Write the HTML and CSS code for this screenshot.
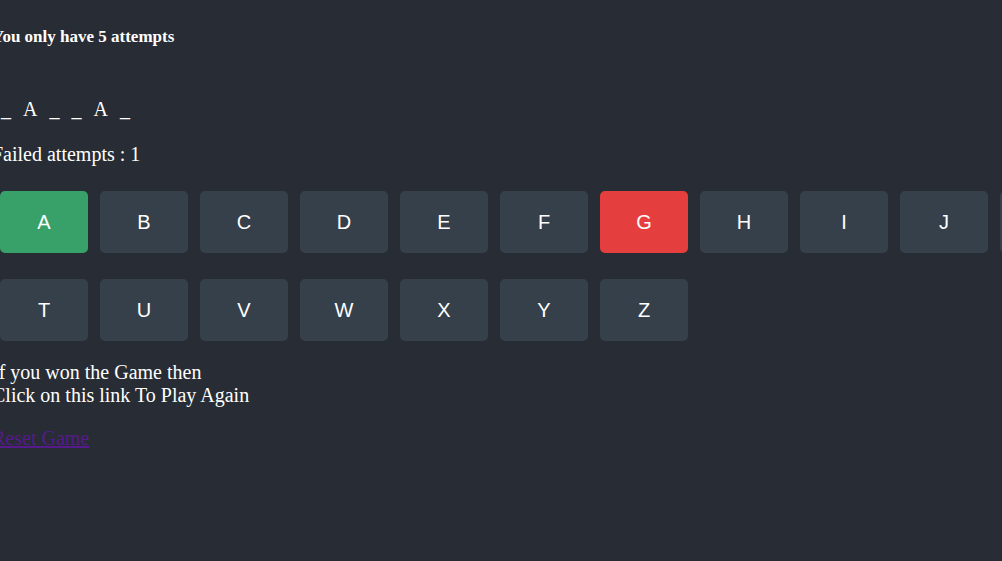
FILE: index.html
```html
<!DOCTYPE html>
<html>
<head>
<meta charset="utf-8">
<link rel="stylesheet" href="styles.css">
</head>
<body>
<div class="app">
  <h4 class="title">You only have 5 attempts</h4>
  <div class="word">
    <span class="ch">_</span><span class="ch">A</span><span class="ch">_</span><span class="ch">_</span><span class="ch">A</span><span class="ch">_</span>
  </div>
  <p class="failed">Failed attempts : 1</p>
  <div class="keyboard">
    <button class="key correct">A</button>
    <button class="key">B</button>
    <button class="key">C</button>
    <button class="key">D</button>
    <button class="key">E</button>
    <button class="key">F</button>
    <button class="key wrong">G</button>
    <button class="key">H</button>
    <button class="key">I</button>
    <button class="key">J</button>
    <button class="key">K</button>
    <button class="key">L</button>
    <button class="key">M</button>
    <button class="key">N</button>
    <button class="key">O</button>
    <button class="key">P</button>
    <button class="key">Q</button>
    <button class="key">R</button>
    <button class="key">S</button>
    <button class="key">T</button>
    <button class="key">U</button>
    <button class="key">V</button>
    <button class="key">W</button>
    <button class="key">X</button>
    <button class="key">Y</button>
    <button class="key">Z</button>
  </div>
  <p class="msg">If you won the Game then<br>Click on this link To Play Again</p>
  <a class="reset" href="#">Reset Game</a>
</div>
</body>
</html>
```
FILE: styles.css
```css
html, body {
  margin: 0;
  padding: 0;
  overflow: hidden;
  background: #282c34;
  height: 100%;
}
body {
  color: #ffffff;
  font-family: "Liberation Serif", "Times New Roman", serif;
}
.app {
  margin-left: -8px;
  padding-top: 28px;
  font-size: 20px;
}
.title {
  margin: 0;
  font-size: 17px;
  font-weight: bold;
  line-height: 18px;
}
.word {
  display: flex;
  gap: 12px;
  margin-top: 52px;
  margin-left: 9px;
  line-height: 23px;
}
.failed {
  margin: 22px 0 0 0;
  line-height: 23px;
}
.keyboard {
  display: flex;
  flex-wrap: wrap;
  width: 1900px;
  gap: 26px 12px;
  margin-top: 25px;
  margin-left: 8px;
}
.key {
  width: 88px;
  height: 62px;
  border: none;
  border-radius: 5px;
  background: #36404a;
  color: #ffffff;
  font-family: "Liberation Sans", Arial, sans-serif;
  font-size: 20px;
  padding: 0;
}
.key.correct { background: #38a169; }
.key.wrong { background: #e53e3e; }
.msg {
  margin: 20px 0 20px 0;
  line-height: 23px;
}
.reset {
  color: #551a8b;
  line-height: 23px;
}
```
